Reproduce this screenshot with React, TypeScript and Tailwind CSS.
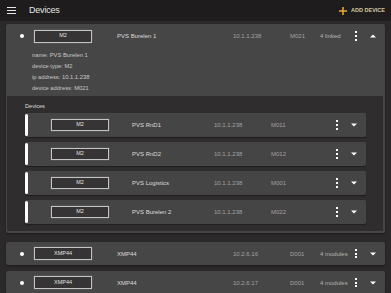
import React from "react";

function Kebab() {
  return (
    <div className="flex w-[6px] shrink-0 flex-col items-center gap-[1.7px]">
      <span className="h-[2px] w-[2px] bg-white" />
      <span className="h-[2px] w-[2px] bg-white" />
      <span className="h-[2px] w-[2px] bg-white" />
    </div>
  );
}

function Caret({ up }: { up?: boolean }) {
  return (
    <svg width="6" height="4" viewBox="0 0 6 4" className="shrink-0">
      {up ? <polygon points="0,3.5 6,3.5 3,0.5" fill="#fff" /> : <polygon points="0,0.5 6,0.5 3,3.5" fill="#fff" />}
    </svg>
  );
}

function TypeBox({ label, h }: { label: string; h: string }) {
  return (
    <div
      className={`flex w-[58px] shrink-0 items-center justify-center border border-[#c4c4c4] bg-[#363434] text-[5.5px] text-[#e4e4e4] shadow-[0_0_0_0.5px_#5a5a5a] ${h}`}
    >
      {label}
    </div>
  );
}

function MainRow({
  type,
  name,
  ip,
  addr,
  status,
  up,
  h,
}: {
  type: string;
  name: string;
  ip: string;
  addr: string;
  status: string;
  up?: boolean;
  h: string;
}) {
  return (
    <div className={`flex items-center pl-[14px] ${h}`}>
      <span className="h-[4px] w-[4px] shrink-0 rounded-full bg-white" />
      <div className="ml-[10px]">
        <TypeBox label={type} h="h-[13px]" />
      </div>
      <div className="ml-[25px] w-[116px] shrink-0 text-[6px] text-[#dcdcdc]">{name}</div>
      <div className="w-[57px] shrink-0 text-[6px] text-[#a2a2a2]">{ip}</div>
      <div className="w-[30px] shrink-0 text-[6px] text-[#a2a2a2]">{addr}</div>
      <div className="w-[33px] shrink-0 text-[6px] text-[#b4b4b4]">{status}</div>
      <Kebab />
      <div className="ml-[11px] flex">
        <Caret up={up} />
      </div>
    </div>
  );
}

function SubCard({ name, addr }: { name: string; addr: string }) {
  return (
    <div className="flex h-[24px] w-[341px] items-center rounded-[2px] bg-[#464545] shadow-[0_1px_1px_rgba(0,0,0,0.35)]">
      <span className="h-[22px] w-[3px] shrink-0 rounded-full bg-white" />
      <div className="ml-[23px]">
        <TypeBox label="M2" h="h-[12px]" />
      </div>
      <div className="ml-[23px] w-[82px] shrink-0 text-[6px] text-[#dcdcdc]">{name}</div>
      <div className="w-[57px] shrink-0 text-[6px] text-[#a2a2a2]">10.1.1.238</div>
      <div className="w-[63px] shrink-0 text-[6px] text-[#a2a2a2]">{addr}</div>
      <Kebab />
      <div className="ml-[11px] flex">
        <Caret />
      </div>
    </div>
  );
}

export default function App() {
  return (
    <div className="h-[293px] w-[391px] overflow-hidden bg-[#2b2929] font-['Liberation_Sans',Arial,sans-serif] leading-none">
      <header className="flex h-[21px] items-center bg-[#1e1c1c] pl-[7px] pr-[6px]">
        <div className="flex w-[9px] flex-col gap-[1.6px]">
          <span className="h-[1.2px] w-[9px] bg-[#e8e8e8]" />
          <span className="h-[1.2px] w-[9px] bg-[#e8e8e8]" />
          <span className="h-[1.2px] w-[9px] bg-[#e8e8e8]" />
        </div>
        <div className="ml-[13px] text-[9px] tracking-[-0.2px] text-[#e6e6e6]">Devices</div>
        <div className="ml-auto flex items-center">
          <svg width="8" height="8" viewBox="0 0 8 8">
            <rect x="3.2" y="0" width="1.6" height="8" fill="#e2a435" />
            <rect x="0" y="3.2" width="8" height="1.6" fill="#e2a435" />
          </svg>
          <span className="ml-[4px] text-[5.5px] font-bold text-[#d9c7a3]">ADD DEVICE</span>
        </div>
      </header>

      <div className="flex flex-col px-[6px] pt-[3px]">
        <div className="flex flex-col rounded-[2px] bg-[#474646] pb-[2px] shadow-[0_1px_2px_rgba(0,0,0,0.4)]">
          <MainRow type="M2" name="PVS Burelen 1" ip="10.1.1.238" addr="M021" status="4 linked" up h="h-[24px]" />
          <div className="mt-[2px] pl-[26px] text-[5.8px] leading-[11px] text-[#c8c8c8]">
            <div>name: PVS Burelen 1</div>
            <div>device type: M2</div>
            <div>ip address: 10.1.1.238</div>
            <div>device address: M021</div>
          </div>
          <div className="ml-[1px] mr-[2px] mt-[2px] flex flex-col bg-[#2f2d2d] pb-[7px] pl-[18px] pt-[5px]">
            <div className="text-[5.6px] leading-[10px] text-[#dedede]">Devices</div>
            <div className="mt-[2px] flex flex-col gap-[5px]">
              <SubCard name="PVS RnD1" addr="M011" />
              <SubCard name="PVS RnD2" addr="M012" />
              <SubCard name="PVS Logistics" addr="M001" />
              <SubCard name="PVS Burelen 2" addr="M022" />
            </div>
          </div>
        </div>

        <div className="mt-[9px] rounded-[2px] bg-[#474646] shadow-[0_1px_2px_rgba(0,0,0,0.4)]">
          <MainRow type="XMP44" name="XMP44" ip="10.2.6.16" addr="D001" status="4 modules" h="h-[23px]" />
        </div>
        <div className="mt-[6px] rounded-[2px] bg-[#474646] shadow-[0_1px_2px_rgba(0,0,0,0.4)]">
          <MainRow type="XMP44" name="XMP44" ip="10.2.6.17" addr="D001" status="4 modules" h="h-[23px]" />
        </div>
      </div>
    </div>
  );
}
